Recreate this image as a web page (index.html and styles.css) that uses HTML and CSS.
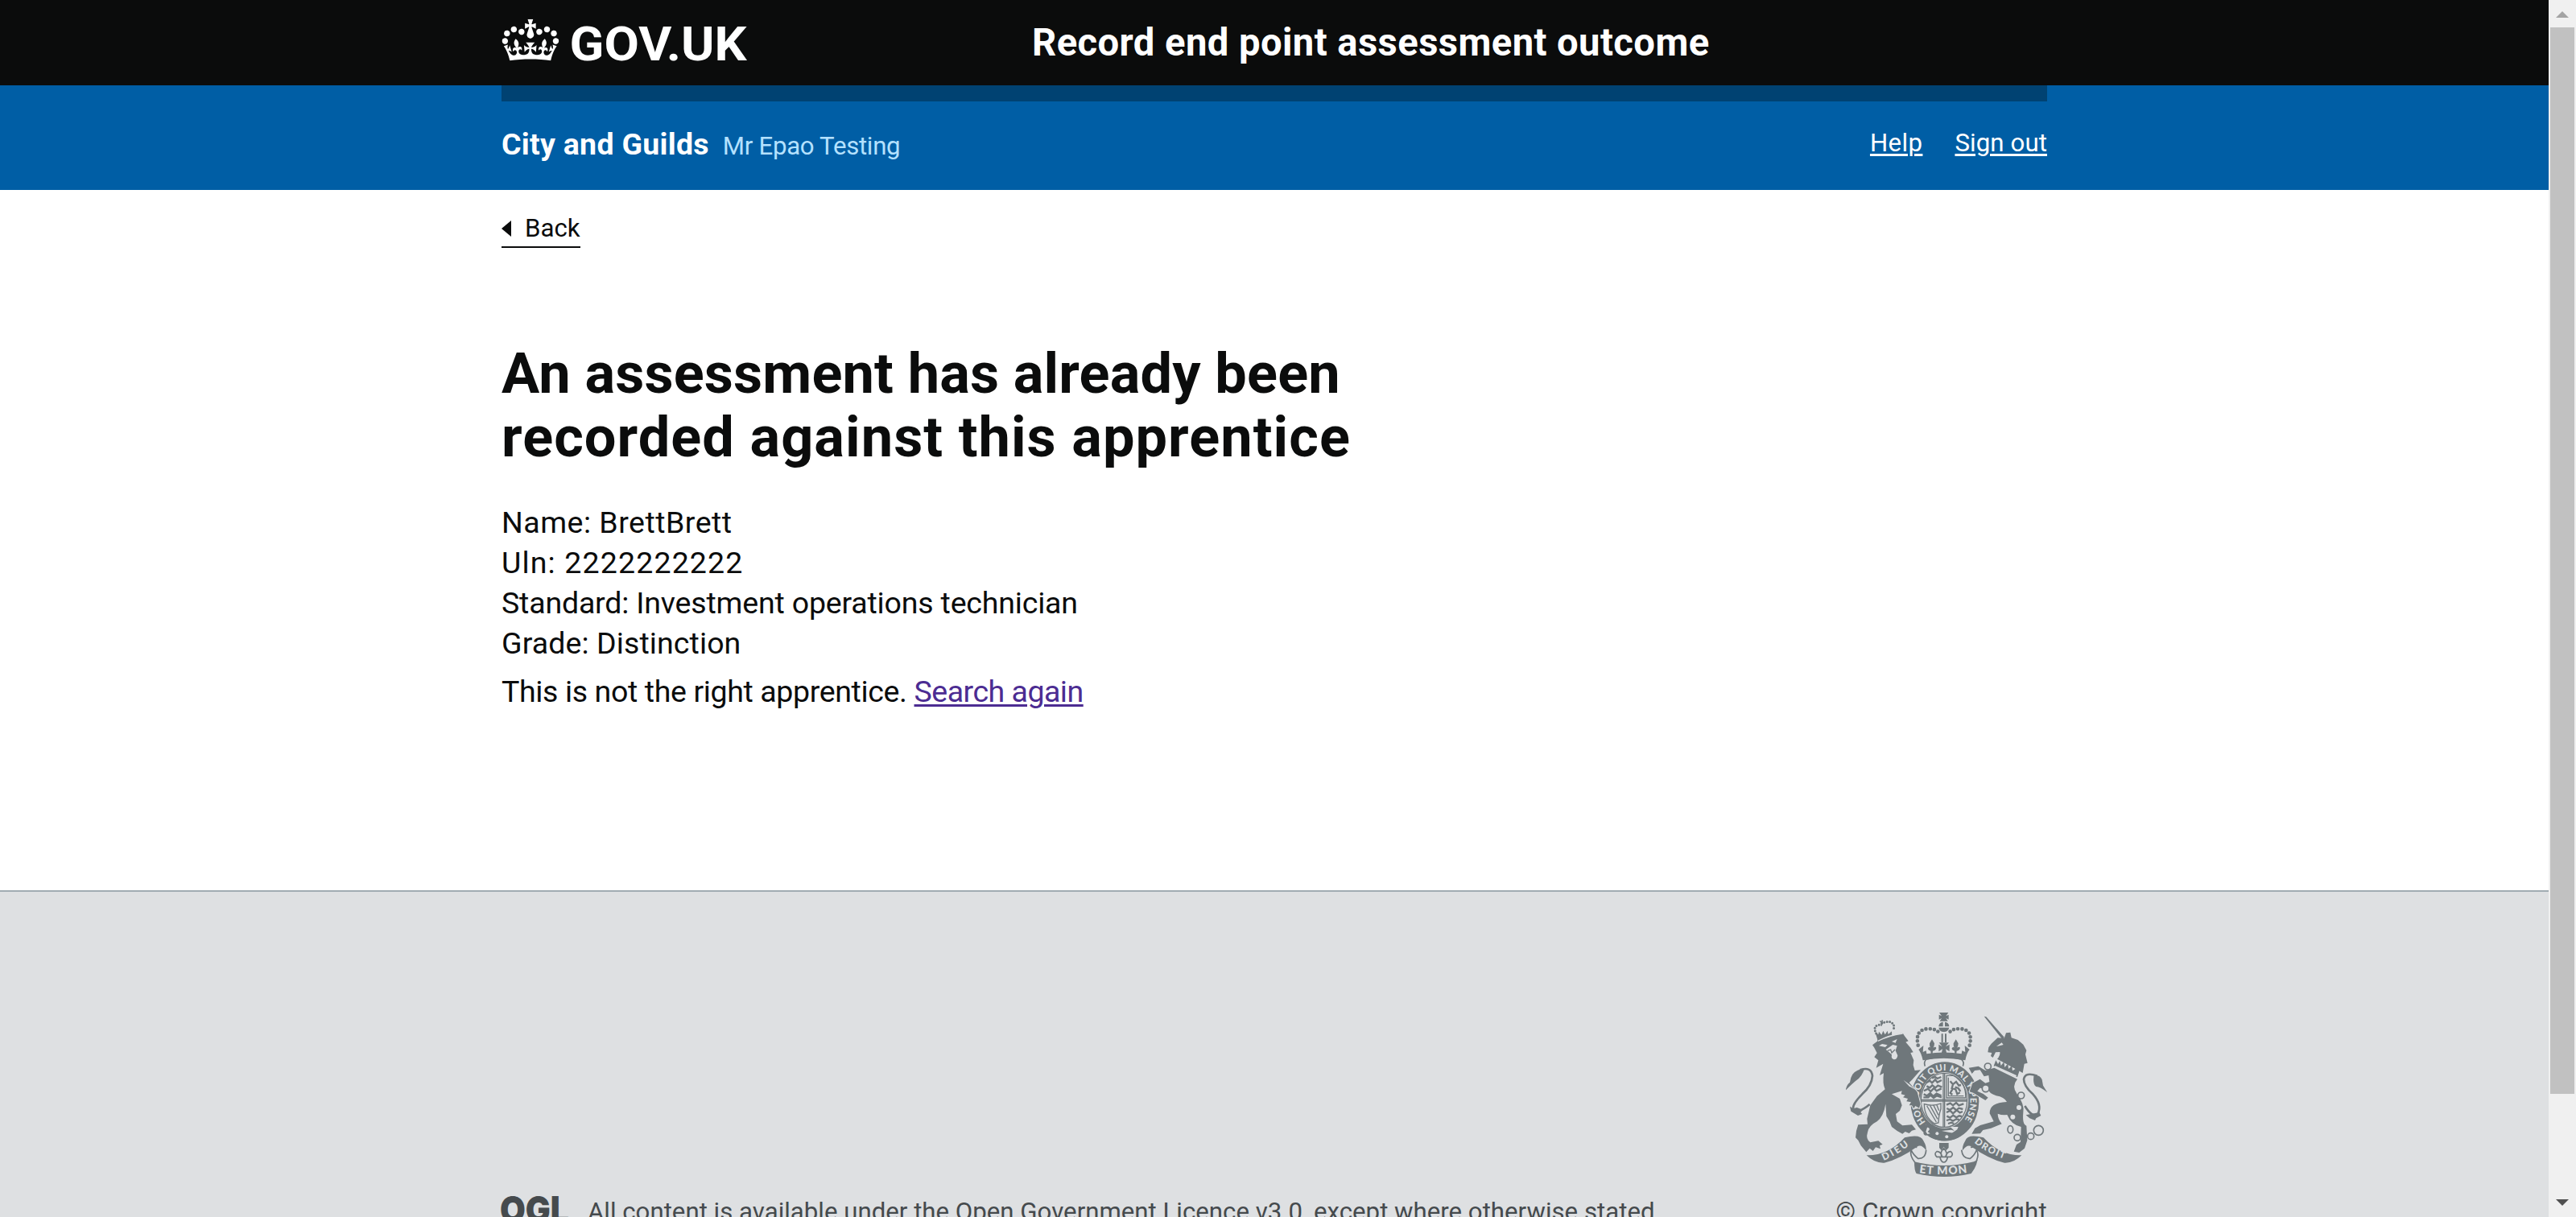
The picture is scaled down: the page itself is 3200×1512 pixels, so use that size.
FILE: index.html
```
<!DOCTYPE html>
<html lang="en">
<head>
<meta charset="utf-8">
<title>Record end point assessment outcome</title>
<link rel="stylesheet" href="styles.css">
</head>
<body>
<div class="viewport">
  <div class="page">
    <header class="header">
      <div class="container header-inner">
        <svg class="logo" viewBox="0 0 320 106" role="img" aria-label="GOV.UK">
          <svg x="0.5" y="23.8" width="70.8" height="52" viewBox="0 0 132 97"><path fill="#fff" fill-rule="evenodd" d="M25 30.2c3.5 1.5 7.7-.2 9.1-3.7 1.5-3.6-.2-7.8-3.9-9.2-3.6-1.4-7.6.3-9.1 3.9-1.4 3.5.3 7.5 3.9 9zM9 39.5c3.6 1.5 7.8-.2 9.2-3.7 1.5-3.6-.2-7.8-3.9-9.1-3.6-1.5-7.6.2-9.1 3.8-1.4 3.5.3 7.5 3.8 9zM4.4 57.2c3.5 1.5 7.7-.2 9.1-3.8 1.5-3.6-.2-7.7-3.9-9.1-3.5-1.5-7.6.3-9.1 3.8-1.4 3.5.3 7.6 3.9 9.1zm38.3-21.4c3.5 1.5 7.7-.2 9.1-3.8 1.5-3.6-.2-7.7-3.9-9.1-3.6-1.5-7.6.3-9.1 3.8-1.3 3.6.4 7.7 3.9 9.1zm64.4-5.6c-3.6 1.5-7.8-.2-9.1-3.7-1.5-3.6.2-7.8 3.8-9.2 3.6-1.4 7.7.3 9.2 3.9 1.3 3.5-.4 7.5-3.9 9zm15.9 9.3c-3.6 1.5-7.7-.2-9.1-3.7-1.5-3.6.2-7.8 3.7-9.1 3.6-1.5 7.7.2 9.2 3.8 1.5 3.5-.3 7.5-3.8 9zm4.7 17.7c-3.6 1.5-7.8-.2-9.2-3.8-1.5-3.6.2-7.7 3.9-9.1 3.6-1.5 7.7.3 9.2 3.8 1.3 3.5-.4 7.6-3.9 9.1zM89.3 35.8c-3.6 1.5-7.8-.2-9.2-3.8-1.4-3.6.2-7.7 3.9-9.1 3.6-1.5 7.7.3 9.2 3.8 1.4 3.6-.3 7.7-3.9 9.1zM69.7 17.7l8.9 4.7V9.3l-8.9 2.8c-.2-.3-.5-.6-.9-.9L72.4 0H59.6l3.5 11.2c-.3.3-.6.5-.9.9l-8.8-2.8v13.1l8.8-4.7c.3.3.6.7.9.9l-5 15.4v.1c-.2.8-.4 1.6-.4 2.4 0 4.1 3.1 7.5 7 8.1h.2c.3 0 .7.1 1 .1.4 0 .7 0 1-.1h.2c4-.6 7.1-4.1 7.1-8.1 0-.8-.1-1.7-.4-2.4V34l-5.1-15.4c.4-.2.7-.6 1-.9zM66 92.8c16.9 0 32.8 1.1 47.1 3.2 4-16.9 8.9-26.7 14-33.5l-9.6-3.4c1 4.9 1.1 7.2 0 10.2-1.5-1.4-3-4.3-4.2-8.7L108.6 76c2.8-2 5-3.2 7.5-3.3-4.4 9.4-10 11.9-13.6 11.2-4.3-.8-6.3-4.6-5.6-7.9 1-4.7 5.7-5.9 8-.5 4.3-8.7-3-11.4-7.6-8.8 7.1-7.2 7.9-13.5 2.1-21.1-8 6.1-8.1 12.3-4.5 20.8-4.7-5.4-12.1-2.5-9.5 6.2 3.4-5.2 7.9-2 7.2 3.1-.6 4.3-6.4 7.8-13.5 7.2-10.3-.9-10.9-8-11.2-13.8 2.5-.5 7.1 1.8 11 7.3L80.2 60c-4.1 4.4-8 5.3-12.3 5.4 1.4-4.4 8-11.6 8-11.6H55.5s6.4 7.2 7.9 11.6c-4.2-.1-8-1-12.3-5.4l1.4 16.4c3.9-5.5 8.5-7.7 10.9-7.3-.3 5.8-.9 12.8-11.1 13.8-7.2.6-12.9-2.9-13.5-7.2-.7-5 3.8-8.3 7.1-3.1 2.7-8.7-4.6-11.6-9.4-6.2 3.7-8.5 3.6-14.7-4.6-20.8-5.8 7.6-5 13.9 2.2 21.1-4.7-2.6-11.9.1-7.7 8.8 2.3-5.5 7.1-4.2 8.1.5.7 3.3-1.3 7.1-5.7 7.9-3.5.7-9-1.8-13.5-11.2 2.5.1 4.7 1.3 7.5 3.3l-4.7-15.4c-1.2 4.4-2.7 7.2-4.3 8.7-1.1-3-.9-5.3 0-10.2l-9.5 3.4c5 6.9 9.9 16.7 14 33.5 14.8-2.1 30.8-3.2 47.7-3.2z"/></svg>
          <text class="logo-text" x="84.5" y="74.8" textLength="220" lengthAdjust="spacingAndGlyphs">GOV.UK</text>
        </svg>
        <div class="service-name">Record end point assessment outcome</div>
      </div>
    </header>

    <div class="account">
      <div class="container">
        <div class="account-bar"></div>
        <div class="account-row">
          <div class="account-who"><strong class="org">City and Guilds</strong><span class="user">Mr Epao Testing</span></div>
          <nav class="account-links"><a class="help" href="#">Help</a><a class="signout" href="#">Sign out</a></nav>
        </div>
      </div>
    </div>

    <main class="container main">
      <a class="back" href="#"><svg class="back-arrow" viewBox="0 0 12 20"><path d="M12 0v20L0 10z"/></svg>Back</a>
      <h1 class="title"><span class="t1">An assessment has already been</span><br><span class="t2">recorded against this apprentice</span></h1>
      <div class="details">
        <div class="d-name">Name: BrettBrett</div>
        <div class="d-uln">Uln: 2222222222</div>
        <div class="d-standard">Standard: Investment operations technician</div>
        <div class="d-grade">Grade: Distinction</div>
      </div>
      <p class="again"><span>This is not the right apprentice.</span><a href="#">Search again</a></p>
    </main>

    <footer class="footer">
      <div class="container footer-inner">
        <div class="licence">
          <svg class="ogl" viewBox="0 0 84 36" role="img" aria-label="OGL"><text x="-2" y="33.5" textLength="86" lengthAdjust="spacingAndGlyphs">OGL</text></svg>
          <span class="licence-text">All content is available under the Open Government Licence v3.0, except where otherwise stated</span>
        </div>
        <div class="copyright">
          <svg class="crest" viewBox="99 84 750 612">
            <defs>
              <path id="garter" d="M398 494A97 113 0 1 1 532 496"/>
              <path id="dieu" d="M240 636Q300 610 350 566"/>
              <path id="droit" d="M577 568Q620 606 700 634"/>
              <path id="etmon" d="M372 681Q464 695 560 679"/>
            </defs>
            <!-- crown -->
            <g class="ink">
              <path d="M447 84h34l-9 13 10-5v18l-10-5 7 11h-30l7-11-10 5V92l10 5zM445 136a20 18 0 0 1 16-17v17zM468 119a20 18 0 0 1 16 17h-16zM445 140h39q-4 16-20 16t-19-16z"/>
              <path d="M455 163h6v32h-6zM468 163h6v32h-6zM446 196h37l-12 15 14-8v26l-14-9 4 18h-20l4-18-14 9v-26l13 8z"/>
              <path d="M420 184l9 15q0 9-4 16 8-6 11 1-2 9-13 11l-1 10h-6l-1-10q-10-2-10-10 5-8 9-2-4-8-3-16zM509 184l9 15q0 9-4 16 8-6 11 1-2 9-13 11l-1 10h-6l-1-10q-10-2-10-10 5-8 9-2-4-8-3-16z"/>
              <path d="M370 222l18-15-2 24 12-5 2 12q64-11 130 0l2-12 12 5-2-24 18 15q-10 10-16 40-80-16-158 0-6-28-16-40z"/>
            </g>
            <path class="line" stroke-width="14" stroke-linecap="round" stroke-dasharray="0 15.5" d="M368 206Q356 150 400 145Q440 142 449 165M560 206Q574 150 530 145Q490 142 481 165"/>
            <path class="line" stroke-width="5" d="M394 284q-6-16 5-26 65-15 130 0 13 10 6 26"/>
            <!-- garter and shield -->
            <path class="ink" fill-rule="evenodd" d="M340 415a127 147 0 1 1 255 0a127 147 0 1 1-255 0zM376 411a90 105 0 1 0 180 0a90 105 0 1 0-180 0z"/>
            <ellipse class="line" stroke-width="4" cx="465" cy="411" rx="86" ry="101"/>
            <path class="line" stroke-width="4" d="M462 310v202M467 310v202M379 409h172M379 414h172"/>
            <g class="line" stroke-width="7">
              <path d="M398 346l14-8 8 8 12-12 8 10 16-8M400 358l12 6 9-9 12 9 9-8 15 6M390 376l15-8 10 10 12-12 10 10 18-9M389 388l12 6 12-10 12 12 12-10 18 8M420 328l12-4 8 6 14-6M388 400h18l8-8 12 10 12-8 18 6"/>
              <path d="M474 428l14-6 10 8 12-10 10 10 18-6M475 441l12 6 12-9 12 10 9-8 15 4M474 456l14-6 10 10 14-12 12 9 10-4M475 470l12 6 12-9 12 8 10-6 10 2M474 486l14-4 10 6 14-8 10 4M480 498l12-4 10 4"/>
              <path stroke-width="4" d="M474 319v83h71v-16Q540 335 500 319zM481 326v69h57"/>
              <path d="M488 340l10 12-4 14 14 4 6 18 10-6M500 350l10-8 10 14 8-2M506 362l12 4 8 12M496 370l-8 14 8 6"/>
              <path stroke-width="4" d="M391 425q30 10 62-2v20q-8 22-9 52l-15 3q-38-25-38-73zM401 432l35 60M413 431l28 50M426 430l18 36M438 429l8 20"/>
            </g>
            <path class="paper" d="M396 500q22 22 52 26l44-5 12 4-16-15h30l-4 10-22 15q-50-4-90-20z"/>
            <path class="ink" d="M392 505q20-14 38 2l-13 4q8 6 30 12 30 8 80 14l-8 12q-30 16-70 12-35-8-45-20-16 4-16-10l10-4q-10-8-6-22z"/>
            <g class="paper"><circle cx="439" cy="535" r="6"/><circle cx="475" cy="547" r="6"/><path d="M402 512q10 0 8 9l-6 7 9 7-10 2-6-9z"/></g>
            <text class="motto" font-size="33"><textPath href="#garter" textLength="490" startOffset="2">HONI SOIT QUI MAL Y PENSE</textPath></text>
            <!-- lion -->
            <g class="ink halo">
              <path d="M198 205l26-20 86-26 8 13 14 18-10 4 18 21 10 17-10 2 12 28-2 18 6 20 22-2-33 37-10 10 30 35 12 45-5 15-14-8-6 10-7-12h-10l7-12-17-3 5-10-18-5 8-8-15-4 3-12-38 12 30 17 8 25-8 20-15 12 5 28 20 15 35-3 15 18-15 4-10 10-15-6-10 8-20-11-20-15-8-20-12-20-3-45q-7 45-32 65-30 15-35 40-8 25 10 38l30-6 16 13-11 5 3 12-18-6-10 14-12-10-13 14-20-24-10-20-10-10 3-25 7-23 35-2-2-20 12-50 25-35 30-25q-10-20-5-60l-15 8 13-43-26 15 8-28-15-12 10-15-10-20z"/>
            </g>
            <g class="ink">
              <path d="M216 182l-8-26 12 10 2-11 10 12 6-15 7 14 9-14 3 13 13-11 1 24q-28 2-53 16z"/>
              <path d="M98 374q4-22 16-30 2-18 10-30 16-20 44-21-8 28-30 44-14 11-40 37z"/>
              <path d="M140 438l22 8-8 10 6 6-16 6-26-16-4-18 12 8z"/>
            </g>
            <path class="line" stroke-width="9" stroke-linecap="round" stroke-dasharray="0 10.5" d="M212 162Q198 134 222 130Q246 116 266 119Q286 132 274 150"/>
            <path class="line" stroke-width="5" d="M226 116l12 8M235 112l-4 22"/>
            <path class="line" stroke-width="8" d="M152 298q42-14 46 22-2 36-38 68-36 36-34 54 16 22 62-16"/>
            <g class="paper"><path d="M222 208l12-7 20 4-8 8zM270 192l20-9-6 14zM248 222l26-18 16 4-6 18 8 18q-2 16-14 15-11-2-8-18-10-10-22-19z"/></g>
            <path class="line" stroke-width="4" d="M254 226l12-4 4 12 12-12"/>
            <path class="paper" d="M218 188q40-22 94-30l-1 6q-54 8-92 28z"/>
            <path class="paper" d="M314 336l22 16 22 20-24-14z"/>
            <!-- unicorn -->
            <g class="ink">
              <path d="M614 98l8 2 68 77-8 7z"/>
              <path d="M628 232l3-18 10-14 24-22 24 2 7-20 16-2 4 20 24 8 20 17 12 22-4 15 8 32-12 3-6 34-95-52q12-12 10-26l-16 1-10 20-8-6 4-12z"/>
              <path class="halo" d="M652 290l86 42q-22 26-2 54 30 40 24 70-4 46 12 50l3 54-10 30-20 16-20-4 10-26 15-10 2-56q-37-8-52-45-20 2-35-4 0 20 15 38l-40 16-30 7-10 13-32 1 12-21 20-11 50-14-15-30q-2-40 64-43-10-18-40-23-28-10-30-25l-30-4-10 12 22 10 18 14-10 10-20-12-25-16-14-4 11-32 28-15 20 15 15-5-3-24-17 4-15-24-20 2-10 12-12-22 36-6 26 16 20-6z"/>
              <path d="M800 316q24 2 30 18l4 22 16 26q-24-20-42-22-14-10-8-44z"/>
              <path d="M820 456l6 12-18 10-4 8-20-8-14-12z"/>
            </g>
            <path class="line" stroke-width="8" d="M812 320q-44-16-50 12 0 26 34 56 36 40 18 74-20 16-48-30"/>
            <path class="paper" d="M657 258l92 46-8 22-92-42z"/>
            <path class="ink" d="M658 262l8 14 7-12 4 18 11-14 3 20 12-14 2 20 13-12 2 19 14-9 12 9-8 24-88-42z"/>
            <path class="paper" d="M655 282l80 36-2 5-80-37zM660 210l20-14 6 8-14 4z"/>
            <g class="paper"><circle cx="744" cy="438" r="9"/><circle cx="721" cy="473" r="9"/></g>
            <g class="paper line" stroke-width="5"><circle cx="628" cy="285" r="12"/><circle cx="620" cy="367" r="13"/><circle cx="752" cy="393" r="12"/></g>
            <g class="line" stroke-width="5"><ellipse cx="712" cy="520" rx="10" ry="14"/><circle cx="738" cy="550" r="12"/><circle cx="788" cy="545" r="12"/><circle cx="817" cy="523" r="18"/></g>
            <!-- scroll and fleur-de-lis -->
            <g class="ink">
              <path d="M176 616q80 2 142-66 60-16 70 12 12 20 10 36-18-26-34-14-64 46-122 60-36 2-66-28zM754 616q-80 2-142-66-60-16-68 12-12 20-10 36 18-26 34-14 64 46 122 60 34 2 64-28z"/>
              <path d="M354 640q110 28 222 0l14-8q-4 20-12 34l-12 18q-100 24-204 0-8-10-8-44z"/>
              <path d="M447 570h35v18l-9 10-9-14-9 14-8-10z"/>
            </g>
            <g class="line" stroke-width="5">
              <path d="M398 596q-2 34-30 32-18-14-26-32-6 20 14 46M364 586q-22-4-22 12M530 596q4 34 32 32 18-14 24-32 10 16 0 40M564 586q24-4 24 12"/>
              <path d="M464 590q18 20 6 32 8-22 20-20 12 10 0 20h-52q-12-12 0-20 14-2 20 20-12-14 6-32zM450 624q4 18 14 18t14-18"/>
            </g>
            <text class="motto" font-size="36"><textPath href="#dieu" textLength="110">DIEU</textPath></text>
            <text class="motto" font-size="35"><textPath href="#droit" textLength="128">DROIT</textPath></text>
            <text class="motto" font-size="42"><textPath href="#etmon" textLength="180">ET MON</textPath></text>
          </svg>
          <span class="copyright-text">© Crown copyright</span>
        </div>
      </div>
    </footer>
  </div>

  <div class="scrollbar">
    <svg class="arrow-up" viewBox="0 0 16 8"><path d="M0 8L8 0l8 8z"/></svg>
    <div class="thumb"></div>
    <svg class="arrow-down" viewBox="0 0 16 8"><path d="M0 0h16L8 8z"/></svg>
  </div>
</div>
</body>
</html>
```
FILE: styles.css
```
* { box-sizing: border-box; }
body { margin: 0; overflow: hidden; background: #fff; color: #0b0c0c; font: 37.5px/50px Roboto, "Liberation Sans", sans-serif; }
svg { display: block; }
span, strong, a, div { white-space: nowrap; }

.viewport { display: flex; height: 1512px; overflow: hidden; }
.page { flex: 1; display: flex; flex-direction: column; }
.container { width: 1920px; margin: 0 auto; }

.header { flex: none; height: 106px; background: #0b0c0c; }
.header-inner { display: grid; grid-template-columns: 659px 1fr; }
.logo { width: 320px; height: 106px; }
.logo-text { fill: #fff; font: 700 58.6px Roboto, sans-serif; }
.service-name { padding-top: 29px; color: #fff; font-size: 47.2px; font-weight: 700; line-height: 48px; letter-spacing: 0.42px; }

.account { flex: none; height: 130px; background: #005ea5; color: #fff; }
.account-bar { height: 20px; background: #004272; }
.account-row { display: flex; justify-content: space-between; align-items: flex-start; line-height: 40px; font-size: 31.2px; }
.account-who { display: flex; align-items: baseline; gap: 17px; padding-top: 33px; }
.org { font-size: 37.5px; letter-spacing: 0.28px; }
.user { color: #b4e1ff; letter-spacing: -0.3px; }
.account-links { display: flex; gap: 40px; padding-top: 32px; }
.account-links a { color: #fff; text-decoration-thickness: 3px; text-underline-offset: 3px; }
.help { letter-spacing: 0.4px; }
.signout { letter-spacing: 0.1px; }

.main { flex: none; height: 870px; display: flex; flex-direction: column; align-items: flex-start; padding-top: 27px; }
.back { display: flex; align-items: center; border-bottom: 2px solid #0b0c0c; padding-bottom: 1px; color: #0b0c0c; font-size: 31.2px; line-height: 42px; text-decoration: none; }
.back-arrow { width: 12px; height: 20px; margin-right: 17px; fill: #0b0c0c; }
.title { margin: 117px 0 41px; font-size: 70.3px; font-weight: 700; line-height: 79px; }
.t1 { letter-spacing: 0.15px; }
.t2 { letter-spacing: 1.05px; }
.d-name { letter-spacing: 0.5px; }
.d-uln { letter-spacing: 1.15px; }
.d-standard { letter-spacing: -0.18px; }
.d-grade { letter-spacing: 0.1px; }
.again { display: flex; gap: 9px; margin: 10px 0 0; letter-spacing: -0.37px; }
.again a { color: #4c2c92; letter-spacing: -0.5px; text-decoration-thickness: 3px; text-underline-offset: 3px; }

.footer { flex: none; border-top: 2px solid #a1acb2; background: #dee0e2; color: #454a4d; font-size: 31.2px; line-height: 40px; }
.footer-inner { display: flex; justify-content: space-between; padding-top: 150px; }
.licence { display: flex; align-items: flex-start; gap: 23px; padding-top: 228px; }
.ogl { width: 84px; height: 36px; margin-top: -1px; overflow: visible; }
.ogl text { fill: #454a4d; font: 900 46px Inter, sans-serif; }
.licence-text { letter-spacing: 0.01px; }
.copyright { display: flex; flex-direction: column; align-items: flex-end; gap: 24px; }
.copyright-text { letter-spacing: 0.25px; }
.crest { width: 250px; height: 204px; }
.ink { fill: #6f777b; }
.paper { fill: #dee0e2; }
.halo { stroke: #dee0e2; stroke-width: 6px; paint-order: stroke; }
.line { stroke: #6f777b; }
.line:not(.paper) { fill: none; }
.motto { fill: #dee0e2; font-family: Lato, sans-serif; font-weight: 900; }

.scrollbar { width: 34px; display: flex; flex-direction: column; align-items: center; background: #f0f0f0; padding: 14px 0; }
.arrow-up { width: 16px; height: 8px; fill: #a3a3a3; }
.thumb { width: 30px; height: 1325px; margin-top: 12px; background: #c1c1c1; }
.arrow-down { width: 16px; height: 8px; margin-top: auto; fill: #505050; }
```
